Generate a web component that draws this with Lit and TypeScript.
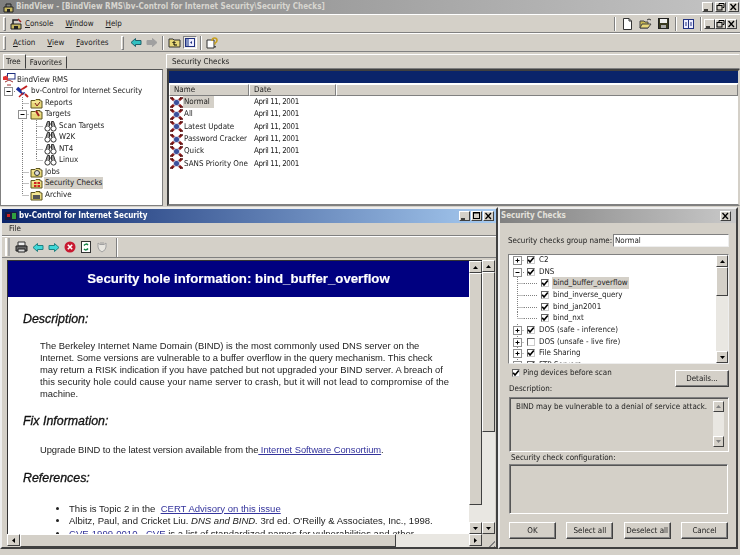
import { LitElement, html, css, svg } from "lit";
import { customElement } from "lit/decorators.js";

const guide = (t: string) => {
  const v = t === "l" ? "M7.5 0V6" : "M7.5 0V12";
  let inner;
  if (t === "h") inner = svg`<path d="M0 6.5H14" stroke="#808080" stroke-width="1" stroke-dasharray="1 1"/>`;
  else if (t === "v") inner = svg`<path d="M7.5 0V12" stroke="#808080" stroke-dasharray="1 1"/>`;
  else if (t === "t" || t === "l") inner = svg`<path d=${v + "M7.5 6.5H14"} stroke="#808080" stroke-dasharray="1 1" fill="none"/>`;
  else if (t === "p" || t === "m") inner = svg`<path d="M7.5 0V12M7.5 6.5H14" stroke="#808080" stroke-dasharray="1 1"/><rect x="3.5" y="2.5" width="8" height="8" fill="#fff" stroke="#909090"/><path d=${t === "p" ? "M5.5 6.5H9.5M7.5 4.5V8.5" : "M5.5 6.5H9.5"} stroke="#000"/>`;
  else if (t === "m0") inner = svg`<path d="M7.5 6V12M11 6.5H14" stroke="#808080" stroke-dasharray="1 1"/><rect x="3.5" y="2.5" width="8" height="8" fill="#fff" stroke="#909090"/><path d="M5.5 6.5H9.5" stroke="#000"/>`;
  else inner = svg``;
  return html`<svg class="g" viewBox="0 0 14 12" width="14" height="12">${inner}</svg>`;
};

const ico = (w: number, h: number, body: unknown) =>
  html`<svg class="ic" width=${w} height=${h} viewBox=${`0 0 ${w} ${h}`}>${body}</svg>`;

const secIcon = ico(13, 11, svg`<path d="M1.5 1L11.5 10M11.5 1L1.5 10" stroke="#8c1a1a" stroke-width="2.6"/><rect x="3.5" y="2.5" width="6" height="6" rx="2.5" fill="#3a4f9c" stroke="#dcdce8"/><path d="M0 1H3M10 1H13M0 10H3M10 10H13" stroke="#5a1010" stroke-width="1.4"/>`);

const folder = (mark: unknown) => ico(13, 12, svg`<path d="M1 3.5H5L6 2.5H10V4H12V11H1Z" fill="#e8d878" stroke="#5c5420"/><path d="M2 5H11" stroke="#fff3b0"/>${mark}`);

const binoc = ico(13, 12, svg`<circle cx="3.5" cy="8.5" r="2.6" fill="#fff" stroke="#333"/><circle cx="9.5" cy="8.5" r="2.6" fill="#fff" stroke="#333"/><path d="M2 6L3.5 1.5H5.5V6M11 6L9.5 1.5H7.5V6" fill="#9a9a9a" stroke="#333"/><path d="M5.5 4H7.5" stroke="#333"/>`);

const rootIcon = ico(14, 13, svg`<path d="M1 5Q7 0 13 5" fill="none" stroke="#c02020"/><rect x="5.5" y="0.5" width="7.5" height="5.5" fill="#fff" stroke="#203080"/><path d="M1 3.5H6V7H1Z" fill="#e03030"/><path d="M3 9L7 7L11 9M5 12H9" stroke="#a03030" fill="none"/>`);

const bvIcon = ico(13, 13, svg`<path d="M1 3L8 9" stroke="#1a2f9c" stroke-width="3.5"/><path d="M5 5L11 1" stroke="#c02020" stroke-width="2"/><path d="M9 9L12 12" stroke="#c02020" stroke-width="2"/><path d="M7 8L3 12" stroke="#c02020" stroke-width="1.5"/><circle cx="7" cy="6" r="1.5" fill="#fff"/>`);

const arrowL = (f: string, s: string) => ico(12, 11, svg`<path d="M1 5.5L5.5 1.5V3.5H11V7.5H5.5V9.5Z" fill=${f} stroke=${s}/>`);
const arrowR = (f: string, s: string) => ico(12, 11, svg`<path d="M11 5.5L6.5 1.5V3.5H1V7.5H6.5V9.5Z" fill=${f} stroke=${s}/>`);

const wbtn = (k: string) => html`<span class="wb"><svg width="9" height="8" viewBox="0 0 9 8">${
  k === "min" ? svg`<path d="M1 7H5" stroke="#000" stroke-width="1.4"/>`
  : k === "max" ? svg`<rect x="1.5" y="0.5" width="6" height="6" fill="none" stroke="#000"/><path d="M1 1H8" stroke="#000"/>`
  : k === "res" ? svg`<path d="M3 2V.5H8V4.5H6.5" fill="none" stroke="#000"/><rect x="1" y="2.5" width="5" height="4.5" fill="none" stroke="#000"/>`
  : svg`<path d="M1.5 1L7 7M7 1L1.5 7" stroke="#000" stroke-width="1.3"/>`}</svg></span>`;

const arrowBtn = (d: string, cls = "") => html`<span class="sa ${cls}"><svg width="7" height="5" viewBox="0 0 7 5"><path d=${
  d === "u" ? "M3.5 1L6 4H1Z" : d === "d" ? "M3.5 4L6 1H1Z" : d === "l" ? "M2 2.5L5 0V5Z" : "M5 2.5L2 0V5Z"} fill=${cls === "dim" ? "#808080" : "#000"}/></svg></span>`;

const vbar = (cls: string) => html`<div class="vs ${cls}">${arrowBtn("u")}<div class="thumb"></div><div class="track"></div>${arrowBtn("d")}</div>`;

const grip = html`<span class="grip"></span>`;
const sep = html`<span class="sep"></span>`;
const gap = (n: number) => html`<span class="gap${n}"></span>`;

const check = (on: boolean) => html`<span class="cb"><svg width="8" height="8" viewBox="0 0 8 8">${on ? svg`<path d="M1.2 3.8L3 6L6.8 1.5" fill="none" stroke="#000" stroke-width="1.6"/>` : ""}</svg></span>`;

@customElement("app-root")
export class AppRoot extends LitElement {
  static styles = css`
    :host { display: block; width: 740px; height: 555px; overflow: hidden; background: #d4d0c8; --ui: "DejaVu Sans Condensed", "DejaVu Sans", sans-serif; font: 7.95px/12px var(--ui); font-stretch: condensed; color: #1c1c1c; }
    * { box-sizing: border-box; }
    .page { width: 740px; height: 555px; display: flex; flex-direction: column; filter: blur(0.4px); }
    svg { display: block; flex: none; }
    .gap2 { width: 2px; flex: none; } .gap3 { width: 3px; flex: none; } .gap4 { width: 4px; flex: none; } .gap5 { width: 5px; flex: none; } .gap6 { width: 6px; flex: none; } .gap7 { width: 7px; flex: none; }
    .top { height: 206px; display: flex; flex-direction: column; flex: none; }
    .tbar { height: 14px; flex: none; background: linear-gradient(90deg, #7f7f7f, #c4c4c4); color: #d8d6d0; font-weight: 700; font-size: 8px; display: flex; align-items: center; padding: 0 1px 0 3px; gap: 2px; }
    .tbar .sp, .bar .sp { flex: 1; }
    .wb { width: 11px; height: 10px; flex: none; background: #d4d0c8; border: 1px solid; border-color: #fff #404040 #404040 #fff; display: flex; align-items: center; justify-content: center; }
    .bar { flex: none; height: 19px; display: flex; align-items: center; padding-left: 3px; border-top: 1px solid #fff; border-bottom: 1px solid #808080; background: #d4d0c8; }
    .grip { width: 3px; height: 14px; border: 1px solid; border-color: #fff #808080 #808080 #fff; flex: none; }
    .sep { width: 2px; height: 14px; border-left: 1px solid #808080; border-right: 1px solid #fff; flex: none; }
    .mi { margin-right: 12px; }
    .ic { flex: none; }
    .pressed { background: #eceae5; border: 1px solid; border-color: #808080 #fff #fff #808080; padding: 1px; margin: 0 3px 0 2px; }
    .panes { flex: 1; display: grid; grid-template-columns: 165px 1fr; min-height: 0; }
    .left { display: flex; flex-direction: column; min-height: 0; padding-top: 2px; }
    .tabs { flex: none; height: 15px; display: flex; padding-left: 3px; align-items: flex-end; }
    .tab { height: 15px; padding: 0 4px 0 2px; border: 1px solid; border-color: #fff #404040 transparent #fff; line-height: 13px; }
    .tab.off { height: 13px; line-height: 11px; border-left: 0; padding: 0 4px; }
    .tree { flex: 1; margin-right: 2px; background: #fff; border: 1px solid #808080; border-top-color: #555; padding-top: 4px; overflow: hidden; min-height: 0; }
    .tr { height: 11.5px; display: flex; align-items: center; white-space: nowrap; }
    .tr .ic { margin-right: 2px; margin-left: 1px; }
    .tr.root .ic { margin-right: 1px; margin-left: 1px; }
    .tr.sel span.t { background: #d4d0c8; padding: 0 1px; margin-left: -1px; }
    .right { display: flex; flex-direction: column; padding-top: 2px; min-width: 0; }
    .rhead { flex: none; height: 15px; padding-left: 5px; border: 1px solid; border-color: #fff transparent #808080 #fff; line-height: 13px; margin-left: 1px; }
    .rbody { flex: 1; background: #fff; border: 2px solid; border-color: #404040 #d4d0c8 #808080 #404040; min-height: 0; margin-left: 2px; display: flex; flex-direction: column; }
    .navy { height: 12px; flex: none; background: #0a246a; }
    .lhead { height: 12px; margin-top: 1px; display: grid; grid-template-columns: 80px 87px 1fr; flex: none; }
    .lhead span { background: #d4d0c8; border: 1px solid; border-color: #fff #808080 #808080 #fff; padding-left: 4px; line-height: 10px; }
    .lr { height: 12.3px; display: grid; grid-template-columns: 80px 1fr; align-items: center; white-space: nowrap; }
    .lr .n { display: flex; align-items: center; padding-left: 1px; }
    .lr .n span { padding: 0 1px; }
    .lr.sel .n span { background: #d4d0c8; padding-right: 4px; }
    .lr .d { padding-left: 5px; letter-spacing: -.4px; }

    .bottom { flex: 1; display: grid; grid-template-columns: 498px 1fr; min-height: 0; padding-bottom: 6px; }
    .win { border: 2px solid; border-color: #eee #404040 #404040 #eee; display: flex; flex-direction: column; min-height: 0; min-width: 0; margin-top: 1px; }
    .wt { flex: none; height: 14px; display: flex; align-items: center; padding: 0 2px 0 3px; font-weight: 700; color: #fff; font-size: 8px; gap: 1px; }
    .wt.act { background: linear-gradient(90deg, #0a246a, #a6caf0); }
    .wt.ina { background: linear-gradient(90deg, #808080, #c8c8c8); color: #e4e2dc; padding-left: 1px; }
    .wt .sp { flex: 1; }
    .wmenu { flex: none; height: 13px; padding: 0 7px; border-bottom: 1px solid #808080; }
    .wtool { flex: none; height: 21px; display: flex; align-items: center; padding-left: 3px; gap: 4px; border-top: 1px solid #fff; }
    .wtool .grip2 { width: 5px; height: 18px; border-left: 2px solid #fff; border-right: 2px solid #aaa; margin-right: 1px; background: #d4d0c8; flex: none; }
    .wtool .end { width: 2px; height: 19px; border-left: 1px solid #808080; border-right: 1px solid #fff; margin-left: 4px; }
    .docwrap { flex: 1; min-height: 0; display: grid; grid-template-columns: 1fr 13px; grid-template-rows: 1fr 13px; border-top: 1px solid #808080; padding: 2px 1px 0 5px; }
    .docwrap .mid { display: grid; grid-template-columns: 1fr 13px; min-height: 0; min-width: 0; border: 1px solid #333; border-width: 1px 0 0 1px; }
    .doc { background: #fff; overflow: hidden; min-height: 0; font: 9.4px/12.1px "Liberation Sans", Arial, sans-serif; color: #222; }
    .banner { height: 36px; background: #000080; color: #fff; font: 700 13.25px/35px "Liberation Sans", Arial, sans-serif; text-align: center; -webkit-text-stroke: .15px #fff; }
    .doc h3 { margin: 0; font: italic 400 12.4px/16px "Liberation Sans", Arial, sans-serif; color: #111; -webkit-text-stroke: .3px #111; padding-left: 15px; }
    .doc p { margin: 0; padding-left: 32px; }
    .doc .w { letter-spacing: .08px; }
    .doc .n { letter-spacing: -.03px; }
    .doc h3.h1 { margin-top: 14px; }
    .doc p.p1 { margin-top: 13px; }
    .doc h3.h2 { margin-top: 13px; }
    .doc p.p2 { margin-top: 15px; letter-spacing: -.06px; }
    .doc h3.h3 { margin-top: 13px; }
    .doc ul { margin: 17px 0 0; padding: 0 0 0 61px; font-size: 9.55px; line-height: 12.5px; }
    .doc a { color: #33339c; text-decoration: underline; }
    .vs { display: flex; flex-direction: column; min-height: 0; }
    .sa { flex: none; width: 13px; height: 12px; background: #d4d0c8; border: 1px solid; border-color: #fff #404040 #404040 #fff; display: flex; align-items: center; justify-content: center; }
    .thumb { flex: none; background: #d4d0c8; border: 1px solid; border-color: #fff #404040 #404040 #fff; }
    .track { flex: 1; background: #e9e7e2; }
    .vs.a .thumb { height: 232px; }
    .vs.b .thumb { height: 160px; }
    .hs { display: flex; grid-column: 1; align-items: stretch; height: 13px; }
    .hs .thumb { width: 376px; }
    .sizer { background: repeating-linear-gradient(135deg, #d4d0c8 0 2px, #808080 2px 3px); clip-path: polygon(100% 30%, 100% 100%, 30% 100%); }

    .dlg { margin-right: 2px; display: flex; flex-direction: column; }
    .dbody { flex: 1; padding: 0 8px 0 9px; display: flex; flex-direction: column; white-space: nowrap; }
    .nm { display: flex; align-items: center; justify-content: space-between; margin: 11px -1px 0 -1px; height: 13px; flex: none; }
    .nm .in { width: 116px; height: 13px; background: #fff; border: 1px solid; border-color: #808080 #eee #eee #808080; padding-left: 1px; line-height: 11px; color: #222; }
    .clist { flex: none; margin: 7px -1px 0; height: 110px; background: #fff; border: 1px solid; border-color: #808080 #eee #eee #808080; display: grid; grid-template-columns: 1fr 12px; overflow: hidden; }
    .clist .rows { padding-left: 1px; overflow: hidden; }
    .clist .rows .inner { margin-top: -1px; }
    .clist .tr { height: 11.7px; }
    .clist .cb { margin: 0 4px 0 3px; }
    .cb { width: 8px; height: 8px; flex: none; background: #fff; border: 1px solid; border-color: #666 #ccc #ccc #666; display: flex; align-items: center; justify-content: center; }
    .cb svg { margin: -1px; }
    .clist .sel { background: #d4d0c8; padding: 0 1px; margin-left: -1px; }
    .vs.c .sa { width: 12px; }
    .vs.c .thumb { height: 29px; }
    .ping { height: 20px; margin-top: 3px; display: flex; align-items: flex-start; flex: none; gap: 3px; padding-left: 3px; }
    .ping .cb { margin-top: 2px; }
    .ping .sp { flex: 1; }
    .btn { background: #d4d0c8; border: 1px solid; border-color: #fff #404040 #404040 #fff; box-shadow: inset -1px -1px #808080; display: flex; align-items: center; justify-content: center; flex: none; }
    .det { width: 54px; height: 17px; margin: 3px -1px 0 0; }
    .lab { flex: none; height: 9px; line-height: 9px; margin-top: -3px; }
    .sunk { flex: none; border: 1px solid; border-color: #808080 #fff #fff #808080; box-shadow: inset 1px 1px #555; }
    .dsc { height: 55px; margin-top: 4px; display: grid; grid-template-columns: 1fr 11px; padding: 3px 4px 4px 6px; margin-right: -1px; }
    .vs.d .sa { width: 11px; height: 11px; }
    .lab.cfgl { margin: 1px 0 2px 2px; }
    .cfg { height: 50px; }
    .btns { flex: none; display: grid; grid-template-columns: repeat(4, 47px); justify-content: space-between; margin-top: 8px; }
    .btns .btn { height: 17px; }
  `;

  render() {
    const dim = "#a0a0a0";
    const treeL = html`
      <div class="tr root">${rootIcon}<span>BindView RMS</span></div>
      <div class="tr">${guide("m0")}${bvIcon}<span>bv-Control for Internet Security</span></div>
      <div class="tr">${guide("")}${guide("t")}${folder(svg`<path d="M5 6L7 9L10 5" stroke="#802020" fill="none"/>`)}<span>Reports</span></div>
      <div class="tr">${guide("")}${guide("m")}${folder(svg`<path d="M6 3L9 8" stroke="#a02020" stroke-width="2"/>`)}<span>Targets</span></div>
      <div class="tr">${guide("")}${guide("v")}${guide("t")}${binoc}<span>Scan Targets</span></div>
      <div class="tr">${guide("")}${guide("v")}${guide("t")}${binoc}<span>W2K</span></div>
      <div class="tr">${guide("")}${guide("v")}${guide("t")}${binoc}<span>NT4</span></div>
      <div class="tr">${guide("")}${guide("v")}${guide("l")}${binoc}<span>Linux</span></div>
      <div class="tr">${guide("")}${guide("t")}${folder(svg`<circle cx="7" cy="7" r="2.5" fill="#ddd" stroke="#333"/>`)}<span>Jobs</span></div>
      <div class="tr sel">${guide("")}${guide("t")}${folder(svg`<rect x="4" y="5" width="6" height="5" fill="#d02020"/><path d="M7 5V10M4 7.5H10" stroke="#e8d878"/>`)}<span class="t">Security Checks</span></div>
      <div class="tr">${guide("")}${guide("l")}${folder(svg`<path d="M3 6H10V10H3Z" fill="#555"/>`)}<span>Archive</span></div>`;

    const rows = ["Normal", "All", "Latest Update", "Password Cracker", "Quick", "SANS Priority One"];
    const checks: [string, string, boolean, string][] = [
      ["p", "C2", true, ""], ["m0", "DNS", true, ""],
      ["t", "bind_buffer_overflow", true, "sel"], ["t", "bind_inverse_query", true, ""], ["t", "bind_jan2001", true, ""], ["l", "bind_nxt", true, ""],
      ["p", "DOS (safe - inference)", true, ""], ["p", "DOS (unsafe - live fire)", false, ""], ["p", "File Sharing", true, ""], ["p", "FTP Servers", true, ""],
    ];
    return html`<div class="page">
      <section class="top">
        <div class="tbar">
          ${ico(11, 11, svg`<path d="M1 5H10V10H1Z" fill="#c8b860" stroke="#222"/><path d="M3 5V2H8V5" fill="none" stroke="#222"/><rect x="4" y="7" width="3" height="3" fill="#222"/>`)}
          <span>BindView - [BindView RMS\\bv-Control for Internet Security\\Security Checks]</span>
          <span class="sp"></span>${wbtn("min")}${wbtn("res")}${wbtn("x")}
        </div>
        <div class="bar">
          ${grip}${gap(4)}
          ${ico(12, 12, svg`<path d="M1 6H11V11H1Z" fill="#c8b860" stroke="#222"/><path d="M3 6V2H8" fill="none" stroke="#222" stroke-width="1.5"/><path d="M8 1L11 4" stroke="#a02020" stroke-width="1.5"/><rect x="4" y="8" width="4" height="3" fill="#222"/>`)}
          ${gap(3)}<span class="mi"><u>C</u>onsole</span><span class="mi"><u>W</u>indow</span><span class="mi"><u>H</u>elp</span>
          <span class="sp"></span>
          ${sep}${gap(6)}
          ${ico(11, 12, svg`<path d="M1.5 .5H7L9.5 3V11.5H1.5Z" fill="#fff" stroke="#333"/><path d="M7 .5V3H9.5" fill="none" stroke="#333"/>`)}${gap(6)}
          ${ico(13, 11, svg`<path d="M1 3H5L6 4H9V10H1Z" fill="#c8b850" stroke="#444"/><path d="M3 6H12L9 10H1Z" fill="#e8d878" stroke="#444"/><path d="M8 2Q10 0 12 2" fill="none" stroke="#333"/>`)}${gap(6)}
          ${ico(11, 11, svg`<rect x=".5" y=".5" width="10" height="10" fill="#3a3a20" stroke="#222"/><rect x="2" y="1" width="7" height="4" fill="#eee"/><rect x="3" y="7" width="5" height="3" fill="#aaa"/>`)}${gap(6)}
          ${sep}${gap(6)}
          ${ico(11, 10, svg`<rect x=".5" y=".5" width="10" height="9" fill="#eef" stroke="#203080"/><path d="M5.5 1V9" stroke="#203080"/><path d="M3 3V7M8 3V7" stroke="#203080"/>`)}${gap(6)}
          ${sep}${gap(2)}
          ${wbtn("min")}${wbtn("res")}${wbtn("x")}${gap(3)}
        </div>
        <div class="bar">
          ${grip}${gap(7)}
          <span class="mi"><u>A</u>ction</span><span class="mi"><u>V</u>iew</span><span class="mi"><u>F</u>avorites</span>
          ${grip}${gap(6)}
          ${arrowL("#30c0c0", "#20606a")}${gap(4)}${arrowR(dim, dim)}${gap(4)}${sep}${gap(4)}
          ${ico(13, 11, svg`<path d="M1 2H5L6 3H12V10H1Z" fill="#e8d878" stroke="#333"/><path d="M6 8V5M4.5 6L6 4.5L7.5 6M6 8H9" stroke="#000" fill="none"/>`)}
          <span class="pressed">${ico(10, 9, svg`<rect x=".5" y=".5" width="9" height="8" fill="#eef" stroke="#203080"/><rect x="1" y="1" width="3" height="7" fill="#8090c0"/><path d="M7 3L5 4.5L7 6Z" fill="#203080"/>`)}</span>
          ${sep}${gap(4)}
          ${ico(12, 12, svg`<path d="M1 3H8V11H1Z" fill="#fff" stroke="#333"/><path d="M6 4Q6 1 8.5 1Q11 1 11 3.5Q11 5 9 6V7.5" fill="none" stroke="#c8a020" stroke-width="1.6"/><rect x="8.3" y="9" width="1.5" height="1.5" fill="#333"/>`)}
        </div>
        <div class="panes">
          <div class="left">
            <div class="tabs"><span class="tab">Tree</span><span class="tab off">Favorites</span></div>
            <div class="tree">${treeL}</div>
          </div>
          <div class="right">
            <div class="rhead">Security Checks</div>
            <div class="rbody">
              <div class="navy"></div>
              <div class="lhead"><span>Name</span><span>Date</span><span></span></div>
              <div>
                ${rows.map((r, i) => html`<div class="lr ${i === 0 ? "sel" : ""}"><div class="n">${secIcon}<span>${r}</span></div><div class="d">April 11, 2001</div></div>`)}
              </div>
            </div>
          </div>
        </div>
      </section>
      <section class="bottom">
        <div class="win">
          <div class="wt act">
            ${ico(13, 10, svg`<rect x="0" y="1" width="12" height="8" fill="#1a1a40"/><path d="M2 3H5V6H2Z" fill="#d02020"/><path d="M7 2H11V8H7Z" fill="#30a040"/>`)}
            <span>bv-Control for Internet Security</span><span class="sp"></span>${wbtn("min")}${wbtn("max")}${wbtn("x")}
          </div>
          <div class="wmenu">File</div>
          <div class="wtool">
            <span class="grip2"></span>
            ${ico(13, 12, svg`<path d="M3 1H10V5H3Z" fill="#eee" stroke="#333"/><path d="M1 5H12V10H1Z" fill="#666" stroke="#222"/><path d="M3 8H10V11H3Z" fill="#ddd" stroke="#222"/>`)}
            ${arrowL("#40d8d8", "#208080")}${arrowR("#40d8d8", "#208080")}
            ${ico(12, 12, svg`<circle cx="6" cy="6" r="5.5" fill="#c81830"/><path d="M3.8 3.8L8.2 8.2M8.2 3.8L3.8 8.2" stroke="#fff" stroke-width="1.6"/>`)}
            ${ico(12, 12, svg`<rect x="1.5" y=".5" width="9" height="11" fill="#fff" stroke="#333"/><path d="M8 4Q6 2 4 4.5M4 8Q6 10 8 7.5" fill="none" stroke="#108040" stroke-width="1.5"/>`)}
            ${ico(12, 12, svg`<path d="M2 2L4 3.5H8L10 2V6Q10 9 6 11Q2 9 2 6Z" fill="#e8e6e0" stroke="#a0a0a0"/><path d="M5 1V3M7 1V3" stroke="#a0a0a0"/>`)}
            <span class="end"></span>
          </div>
          <div class="docwrap">
            <div class="mid">
              <div class="doc">
                <div class="banner">Security hole information: bind_buffer_overflow</div>
                <h3 class="h1">Description:</h3>
                <p class="p1">The Berkeley Internet Name Domain (BIND) is the most commonly used DNS server on the<br><span class="n">Internet. Some versions are vulnerable to a buffer overflow in the query mechanism. This check</span><br>may return a RISK indication if you have patched but not upgraded your BIND server. A breach of<br><span class="w">this security hole could cause your name server to crash, but it will not lead to compromise of the</span><br>machine.</p>
                <h3 class="h2">Fix Information:</h3>
                <p class="p2">Upgrade BIND to the latest version available from the<a> Internet Software Consortium</a>.</p>
                <h3 class="h3">References:</h3>
                <ul>
                  <li>This is Topic 2 in the &nbsp;<a>CERT Advisory on this issue</a></li>
                  <li>Albitz, Paul, and Cricket Liu. <i>DNS and BIND.</i> 3rd ed. O'Reilly &amp; Associates, Inc., 1998.</li>
                  <li><a>CVE-1999-0010</a> - <a>CVE</a> is a list of standardized names for vulnerabilities and other</li>
                </ul>
              </div>
              ${vbar("a")}
            </div>
            ${vbar("b")}
            <div class="hs">${arrowBtn("l")}<div class="thumb"></div><div class="track"></div>${arrowBtn("r")}</div>
            <div class="sizer"></div>
          </div>
        </div>
        <div class="win dlg">
          <div class="wt ina"><span>Security Checks</span><span class="sp"></span>${wbtn("x")}${gap(2)}</div>
          <div class="dbody">
            <div class="nm"><span>Security checks group name:</span><span class="in">Normal</span></div>
            <div class="clist">
              <div class="rows"><div class="inner">
                ${checks.map(([g, t, on, s]) => html`<div class="tr">${guide(g)}${g === "t" || g === "l" ? guide("h") : ""}${check(on)}<span class=${s}>${t}</span></div>`)}
              </div></div>
              ${vbar("c")}
            </div>
            <div class="ping">${check(true)}<span>Ping devices before scan</span><span class="sp"></span><span class="btn det">Details...</span></div>
            <div class="lab">Description:</div>
            <div class="sunk dsc"><div>BIND may be vulnerable to a denial of service attack.</div><div class="vs d">${arrowBtn("u", "dim")}<div class="track"></div>${arrowBtn("d", "dim")}</div></div>
            <div class="lab cfgl">Security check configuration:</div>
            <div class="sunk cfg"></div>
            <div class="btns"><span class="btn">OK</span><span class="btn">Select all</span><span class="btn">Deselect all</span><span class="btn">Cancel</span></div>
          </div>
        </div>
      </section>
    </div>`;
  }
}
